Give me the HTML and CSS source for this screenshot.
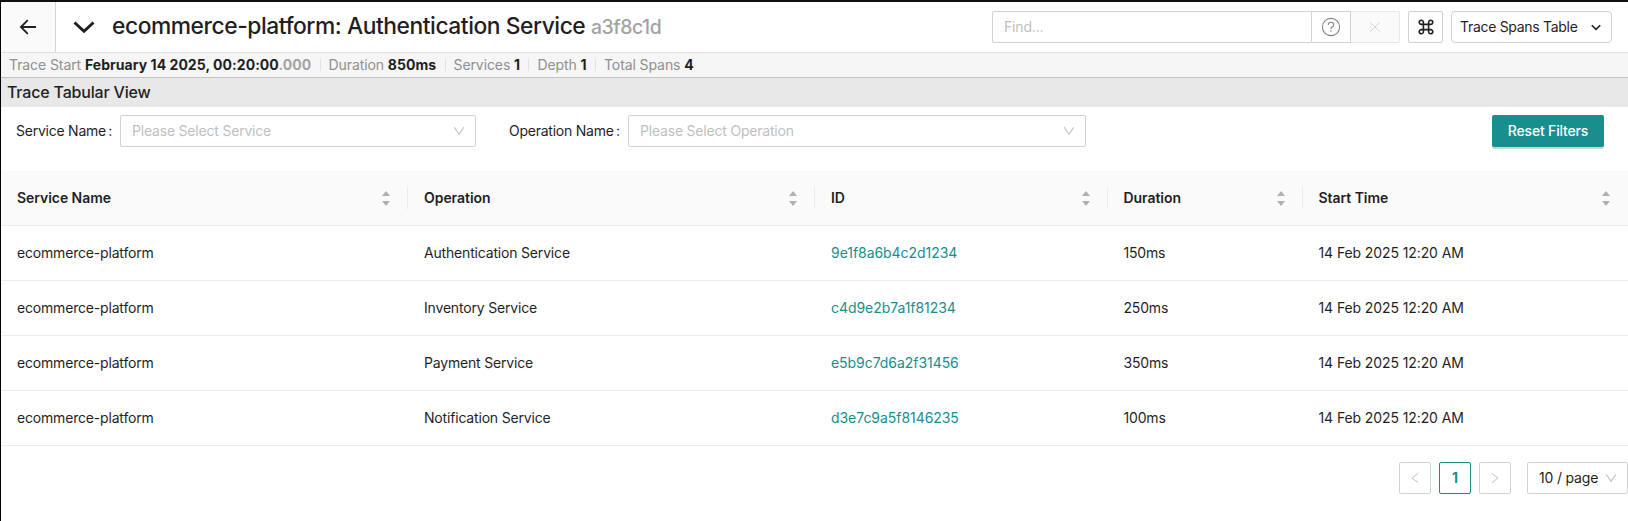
FILE: index.html
```html
<!DOCTYPE html>
<html lang="en">
<head>
<meta charset="utf-8">
<title>ecommerce-platform: Authentication Service</title>
<link rel="stylesheet" href="styles.css">
</head>
<body>
<div class="page">
  <header class="header">
    <a class="back"><svg width="18" height="16" viewBox="0 0 18 16"><path d="M17 8H2.3M8.8 1.2L1.9 8l6.9 6.8"/></svg></a>
    <svg class="collapse" width="22" height="13" viewBox="0 0 22 13"><path d="M1.5 1.5L11 10.3l9.5-8.8"/></svg>
    <h1 class="title">ecommerce-platform: Authentication Service <small>a3f8c1d</small></h1>
    <div class="search">
      <div class="find">Find...</div>
      <div class="help"><svg width="20" height="20" viewBox="0 0 20 20"><circle cx="10" cy="10" r="8.6"/><path d="M7.3 8.1V7.7C7.3 6.3 8.5 5.3 10 5.3s2.7 1 2.7 2.4c0 1.1-.7 1.9-1.6 2.3-.7.3-1.1.7-1.1 1.5v.5"/><circle class="dot" cx="10" cy="14" r=".8"/></svg></div>
      <div class="clear"><svg width="12" height="12" viewBox="0 0 12 12"><path d="M1.2 1.2l9.6 9.6M10.8 1.2l-9.6 9.6"/></svg></div>
    </div>
    <div class="shortcut"><svg width="16" height="16" viewBox="0 0 16 16"><path d="M5.4 5.4h5.2v5.2H5.4zM5.4 5.4H3.5a2.1 2.1 0 1 1 1.9-2.1zM10.6 5.4V3.3a2.1 2.1 0 1 1 1.9 2.1zM10.6 10.6h1.9a2.1 2.1 0 1 1-1.9 2.1zM5.4 10.6v2.1a2.1 2.1 0 1 1-1.9-2.1z"/></svg></div>
    <div class="view"><span>Trace Spans Table</span><svg width="10" height="7" viewBox="0 0 10 7"><path d="M.8 1.2L5 5.4l4.2-4.2"/></svg></div>
  </header>
  <div class="stats">
    <div class="stat">Trace Start <b>February 14 2025, 00:20:00<i>.000</i></b></div>
    <div class="stat">Duration <b>850ms</b></div>
    <div class="stat">Services <b>1</b></div>
    <div class="stat">Depth <b>1</b></div>
    <div class="stat">Total Spans <b>4</b></div>
  </div>
  <h2 class="heading">Trace Tabular View</h2>
  <div class="filters">
    <span class="label service-label">Service Name<i>:</i></span>
    <div class="select service">Please Select Service<svg class="down" width="12" height="10" viewBox="0 0 12 10"><path d="M1.2 1.2L6 8.2l4.8-7"/></svg></div>
    <span class="label operation-label">Operation Name<i>:</i></span>
    <div class="select operation">Please Select Operation<svg class="down" width="12" height="10" viewBox="0 0 12 10"><path d="M1.2 1.2L6 8.2l4.8-7"/></svg></div>
    <button class="reset">Reset Filters</button>
  </div>
  <div class="table">
    <div class="row head">
      <div class="cell">Service Name<svg class="sort" width="8" height="15" viewBox="0 0 8 15"><path d="M0 5L4 0l4 5zM0 10h8l-4 5z"/></svg></div>
      <div class="cell">Operation<svg class="sort" width="8" height="15" viewBox="0 0 8 15"><path d="M0 5L4 0l4 5zM0 10h8l-4 5z"/></svg></div>
      <div class="cell">ID<svg class="sort" width="8" height="15" viewBox="0 0 8 15"><path d="M0 5L4 0l4 5zM0 10h8l-4 5z"/></svg></div>
      <div class="cell">Duration<svg class="sort" width="8" height="15" viewBox="0 0 8 15"><path d="M0 5L4 0l4 5zM0 10h8l-4 5z"/></svg></div>
      <div class="cell">Start Time<svg class="sort" width="8" height="15" viewBox="0 0 8 15"><path d="M0 5L4 0l4 5zM0 10h8l-4 5z"/></svg></div>
    </div>
    <div class="row"><div class="cell">ecommerce-platform</div><div class="cell">Authentication Service</div><div class="cell id">9e1f8a6b4c2d1234</div><div class="cell">150ms</div><div class="cell date">14 Feb 2025 12:20 AM</div></div>
    <div class="row"><div class="cell">ecommerce-platform</div><div class="cell">Inventory Service</div><div class="cell id">c4d9e2b7a1f81234</div><div class="cell">250ms</div><div class="cell date">14 Feb 2025 12:20 AM</div></div>
    <div class="row"><div class="cell">ecommerce-platform</div><div class="cell">Payment Service</div><div class="cell id">e5b9c7d6a2f31456</div><div class="cell">350ms</div><div class="cell date">14 Feb 2025 12:20 AM</div></div>
    <div class="row"><div class="cell">ecommerce-platform</div><div class="cell">Notification Service</div><div class="cell id">d3e7c9a5f8146235</div><div class="cell">100ms</div><div class="cell date">14 Feb 2025 12:20 AM</div></div>
  </div>
  <div class="pagination">
    <div class="pager"><svg width="8" height="12" viewBox="0 0 8 12"><path d="M7.2 1.3L1 6l6.2 4.7"/></svg></div>
    <div class="pager current">1</div>
    <div class="pager"><svg width="8" height="12" viewBox="0 0 8 12"><path d="M.8 1.3L7 6 .8 10.7"/></svg></div>
    <div class="size">10 / page<svg class="down" width="12" height="10" viewBox="0 0 12 10"><path d="M1.2 1.2L6 8.2l4.8-7"/></svg></div>
  </div>
</div>
</body>
</html>
```
FILE: styles.css
```css
* { box-sizing: border-box; }
body {
  margin: 0;
  font: 14px/22px Inter, "Liberation Sans", sans-serif;
  letter-spacing: -0.18px;
  color: #1f1f1f;
  background: #fff;
}
svg { display: block; fill: none; stroke: currentColor; flex: none; }
i { font-style: normal; }
.page { height: 521px; border-top: 2px solid #110f10; border-left: 1px solid #000; overflow: hidden; }

.header { display: flex; align-items: center; height: 51px; border-bottom: 1px solid #e0e0e0; padding-right: 16px; }
.back { display: flex; align-items: center; justify-content: center; align-self: stretch; width: 55px; background: #fafafa; border-right: 1px solid #d6d6d6; }
.back svg { stroke-width: 1.8; }
.collapse { margin-left: 17px; stroke-width: 3; }
.title { margin: 0 auto 2px 17px; font-size: 22.8px; line-height: 32px; font-weight: 500; letter-spacing: -0.44px; white-space: nowrap; }
.title small { font-size: 19.4px; color: #a3a3a3; font-weight: 500; }
.search { display: flex; height: 32px; color: #bfbfbf; }
.find { width: 320px; border: 1px solid #d2d2d2; border-radius: 2px 0 0 2px; padding: 4px 11px; }
.help, .clear { display: flex; align-items: center; justify-content: center; }
.help { width: 39px; border: 1px solid #d2d2d2; border-left: 0; color: #858585; }
.help svg { stroke-width: 1.1; }
.help .dot { fill: currentColor; stroke: none; }
.clear { width: 49px; border: 1px solid #e8e8e8; border-left: 0; border-radius: 0 2px 2px 0; background: #fafafa; color: #d6d6d6; }
.shortcut { display: flex; align-items: center; justify-content: center; width: 35px; height: 32px; margin-left: 8px; border: 1px solid #d2d2d2; border-radius: 2px; }
.shortcut svg { stroke-width: 1.6; }
.view { display: flex; align-items: center; justify-content: space-between; width: 161px; height: 32px; margin-left: 8px; padding: 0 10px 0 8px; border: 1px solid #d2d2d2; border-radius: 4px; letter-spacing: -0.3px; }
.view svg { stroke-width: 1.5; }

.stats { display: flex; align-items: center; height: 25px; padding-left: 8px; background: #f6f6f6; border-bottom: 1px solid #c2c2c2; color: #909090; }
.stat { line-height: 12px; white-space: nowrap; letter-spacing: -0.09px; }
.stat + .stat { margin-left: 8.3px; padding-left: 8px; border-left: 1px solid #e2e2e2; }
.stat b { color: #1f1f1f; font-weight: 700; letter-spacing: 0.05px; }
.stat b i { color: #a3a3a3; }
.heading { margin: 0; height: 29px; padding: 0 6px; background: #e8e8e8; font-size: 16px; line-height: 29px; font-weight: 500; }

.filters { display: flex; align-items: center; height: 64px; padding: 8px 24px 24px 15px; }
.label { letter-spacing: -0.24px; }
.label i { margin-left: 2.4px; }
.service-label { width: 104px; }
.operation-label { width: 119px; margin-left: 33px; }
.select { display: flex; align-items: center; justify-content: space-between; height: 32px; padding: 0 10px 0 11px; border: 1px solid #d2d2d2; border-radius: 2px; color: #bfbfbf; letter-spacing: -0.2px; }
.service { width: 356px; }
.operation { width: 458px; }
.down { color: #bfbfbf; stroke-width: 1.1; }
.reset { width: 112px; height: 32px; margin-left: auto; padding: 0; border: 0; border-radius: 2px; background: #188e8e; color: #fff; font: inherit; font-weight: 500; letter-spacing: -0.17px; box-shadow: 0 2px 0 rgba(0, 60, 60, 0.2); }

.row { display: grid; grid-template-columns: 407px 407px 292.5px 195px 1fr; height: 55px; border-bottom: 1px solid #ededed; }
.cell { display: flex; align-items: center; justify-content: space-between; padding: 0 16px; white-space: nowrap; }
.head { background: #fafafa; font-weight: 600; letter-spacing: -0.05px; }
.head .cell { position: relative; }
.head .cell + .cell::before { content: ""; position: absolute; left: -1px; top: 16px; width: 1px; height: 22px; background: #ebebeb; }
.sort { margin-right: 2px; fill: #b0b0b0; stroke: none; }
.id { color: #188e8e; letter-spacing: -0.05px; }
.date { letter-spacing: -0.1px; }

.pagination { display: flex; justify-content: flex-end; gap: 8px; margin-top: 16px; }
.pager { display: flex; align-items: center; justify-content: center; width: 32px; height: 32px; border: 1px solid #d2d2d2; border-radius: 2px; color: #bfbfbf; }
.current { border-color: #188e8e; color: #188e8e; font-weight: 700; }
.size { display: flex; align-items: center; justify-content: space-between; width: 101px; height: 32px; margin-left: 8px; padding: 0 10px 0 11px; border: 1px solid #d2d2d2; border-radius: 2px; }
```
